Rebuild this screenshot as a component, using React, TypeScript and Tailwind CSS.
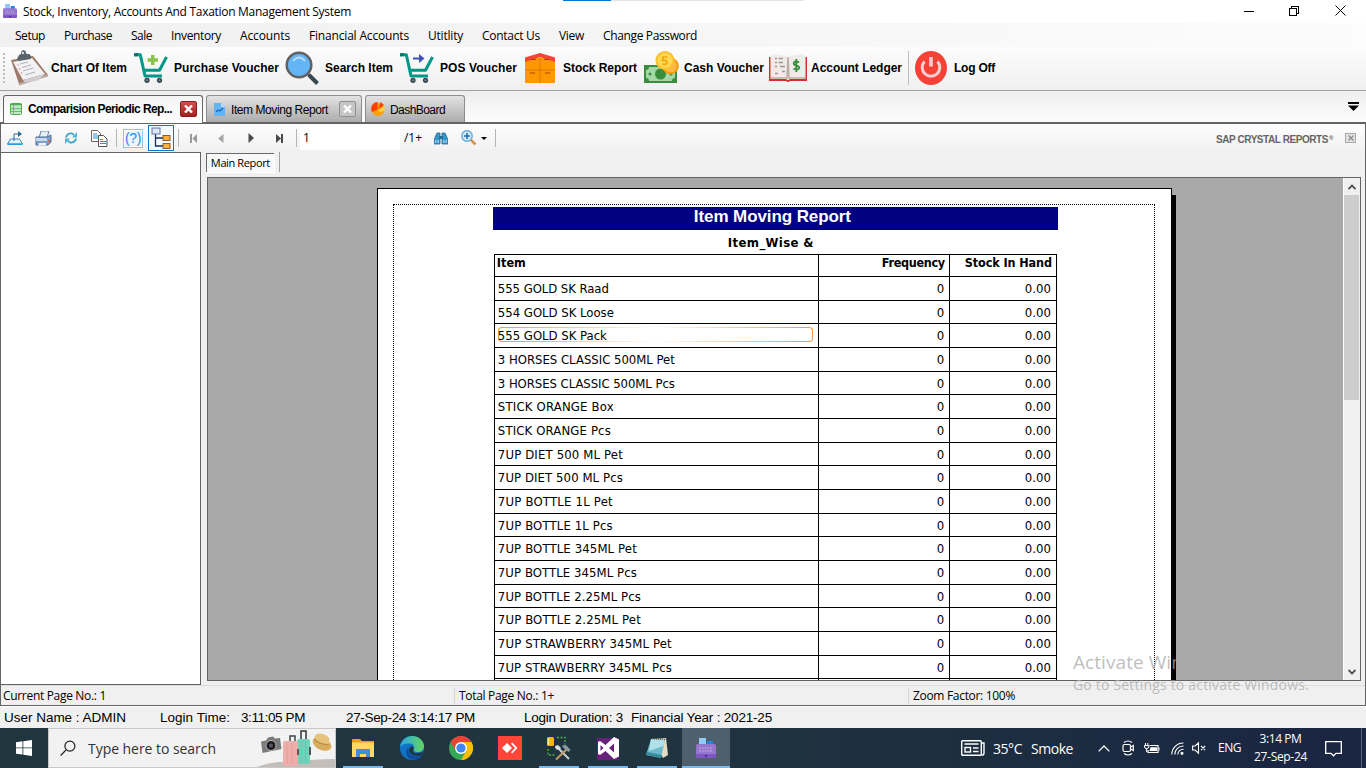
import React, { useLayoutEffect, useRef, useState } from "react";

/* Nowrap label whose letter spacing is computed so that it fills exactly `w` pixels. */
function Label({ w, children, className = "" }: { w: number; children: string; className?: string }) {
  const ref = useRef<HTMLSpanElement>(null);
  const [spacing, setSpacing] = useState(0);
  useLayoutEffect(() => {
    if (ref.current) {
      const natural = ref.current.getBoundingClientRect().width;
      setSpacing((w - natural) / children.length);
    }
  }, [w, children]);
  return (
    <span className={`block shrink-0 whitespace-nowrap ${className}`} style={{ width: w }}>
      <span ref={ref} className="inline-block" style={{ letterSpacing: spacing }}>
        {children}
      </span>
    </span>
  );
}

const AppIcon = ({ className }: { className: string }) => (
  <svg viewBox="0 0 20 20" className={className}>
    <rect x="3" y="0" width="7" height="8" fill="#90caf9" />
    <rect x="11" y="3" width="6" height="5" rx="1" fill="#1e88e5" />
    <path d="M0 8q0-2 2-2h16q2 0 2 2v9H0z" fill="#9575cd" />
    <path d="M0 16h20v2.500q0 1.500-1.500 1.500h-17Q0 20 0 18.500z" fill="#7e57c2" />
    <path d="M3 10h14M3 13h14" stroke="#b39ddb" strokeWidth="1.500" strokeDasharray="1.800 1" />
    <rect x="9" y="17" width="2" height="1.500" fill="#311b92" />
  </svg>
);

const ClipboardIcon = () => (
  <svg viewBox="0 0 38 36" className="h-9 w-[38px] shrink-0">
    <path d="M0 10l22-4 15 19L8 34z" fill="#a07a68" />
    <path d="M8 35.500l29-9V24L8 33z" fill="#b9a79c" />
    <path d="M2 12l19-4 13 16-22 6z" fill="#f2f2f5" />
    <path d="M12 30l22-6-7 6.500-13 2z" fill="#d2cdd0" />
    <path d="M9 14l8-2M11 17.500l9-2.500M12 21l10-3M14 25l10-3" stroke="#b4b4ba" strokeWidth="1.100" />
    <path d="M6.500 15h1.200M8 19h1.200M10 23h1.200" stroke="#d98a80" strokeWidth="1.500" />
    <path d="M6 9l2-4 2-1 .5-3 2-1 2 1 1 3 3 0 2 3-1 2-12 2z" fill="#59636a" />
    <circle cx="12" cy="3" r="1.200" fill="#d9dde0" />
  </svg>
);

const CartIcon = ({ kind }: { kind: "plus" | "arrow" }) => (
  <svg viewBox="0 0 34 30" className="h-[30px] w-[34px] shrink-0">
    <path d="M0 1.800h6.300L11 23h17" fill="none" stroke="#009688" strokeWidth="3" strokeLinejoin="round" />
    <path d="M9 17.300h16.500L32.500 4" fill="none" stroke="#009688" strokeWidth="3" strokeLinejoin="round" />
    <path d="M0 1.800h4" stroke="#00796b" strokeWidth="3" />
    {kind === "plus" ? (
      <path d="M17 2h3.500v3.300H24v3.400h-3.500V12H17V8.700h-3.500V5.300H17z" fill="#8bc34a" />
    ) : (
      <path d="M13 4.500h6V1l5.500 4.500L19 10V6.500h-6z" fill="#3f51b5" />
    )}
    <circle cx="13" cy="27.300" r="2.600" fill="#37474f" />
    <circle cx="25.500" cy="27.300" r="2.600" fill="#37474f" />
    <circle cx="13" cy="27.300" r="1" fill="#78909c" />
    <circle cx="25.500" cy="27.300" r="1" fill="#78909c" />
  </svg>
);

const SearchBigIcon = () => (
  <svg viewBox="0 0 34 34" className="h-[34px] w-[34px] shrink-0">
    <path d="M21 21l5 5" stroke="#616161" strokeWidth="3" />
    <path d="M24 24l8.500 8.500" stroke="#37474f" strokeWidth="4" />
    <circle cx="14" cy="14" r="12.300" fill="#64b5f6" stroke="#616161" strokeWidth="2.500" />
    <path d="M8 10q6-7 12 0" fill="none" stroke="#bbdefb" strokeWidth="1.800" />
  </svg>
);

const CabinetIcon = () => (
  <svg viewBox="0 0 30 30" className="h-[30px] w-[30px] shrink-0">
    <path d="M0 5h30v25H0z" fill="#ff9800" />
    <path d="M0 4.500L15 0l15 4.500V9l-15-5L0 9z" fill="#f44336" />
    <path d="M15 4v26M0 17h30" stroke="#e07800" strokeWidth="1" />
    <path d="M6 6.500h5M19 6.500h5M5 20h5M20 20h5" stroke="#a84300" strokeWidth="1.200" />
  </svg>
);

const MoneyIcon = () => (
  <svg viewBox="0 0 36 34" className="h-[34px] w-9 shrink-0">
    <rect x="1" y="14" width="33" height="18" fill="#388e3c" />
    <path d="M6 16h23q0 3 3 3v8q-3 0-3 3H6q0-3-3-3v-8q3 0 3-3z" fill="#a5d6a7" />
    <circle cx="17.500" cy="23" r="5.500" fill="#388e3c" />
    <circle cx="7" cy="23" r="1.500" fill="#388e3c" />
    <circle cx="28" cy="23" r="1.500" fill="#388e3c" />
    <circle cx="27.500" cy="15" r="8.300" fill="#ff9800" />
    <circle cx="27.500" cy="15" r="6.300" fill="#ffb74d" />
    <circle cx="22" cy="9.500" r="9.500" fill="#fbc02d" />
    <circle cx="22" cy="9.500" r="7.500" fill="#fdd854" />
    <path d="M24.500 6h-4.500l-.5 3.500q4-.8 4.500 1.500.2 3-4.500 2" fill="none" stroke="#f5a500" strokeWidth="1.700" />
  </svg>
);

const LedgerIcon = () => (
  <svg viewBox="0 0 38 29" className="h-[29px] w-[38px] shrink-0">
    <path d="M0 3h1.500v22H17q1 1 2 1t2-1h15.500V3H38v24H21q-2 2-4 0H0z" fill="#d32f2f" />
    <path d="M3 0l15 2v22H2V3z" fill="#efebe9" />
    <path d="M35 0L20 2v22h16V3z" fill="#efebe9" />
    <path d="M2 24h16l1-21 1 21h16" fill="none" stroke="#bcaaa4" strokeWidth="1.500" />
    <path d="M6 4.500h2M6 8.500h2M6 12.500h2M9.500 4.500H14M9.500 8.500H14M11 12.500h5M6 19.500h3M13 17.500h3" stroke="#a1978f" strokeWidth="1.300" />
    <path d="M30 8.500q-3-2-5 0-1 2 2 3 4 1 3 3-2 2.500-5.500 0M27.300 5v13" fill="none" stroke="#388e3c" strokeWidth="1.900" />
  </svg>
);

const PowerIcon = () => (
  <svg viewBox="0 0 34 34" className="h-[34px] w-[34px] shrink-0">
    <ellipse cx="17" cy="17" rx="16" ry="17" fill="#f44336" />
    <path d="M10.500 10.500a8.800 8.800 0 1 0 13 0" fill="none" stroke="#ffcdd2" strokeWidth="3" />
    <path d="M17 6v9.500" stroke="#ffcdd2" strokeWidth="3.600" />
  </svg>
);

const menus: [string, number][] = [
  ["Setup", 30], ["Purchase", 48], ["Sale", 21], ["Inventory", 50], ["Accounts", 50],
  ["Financial Accounts", 100], ["Utitlity", 35], ["Contact Us", 58], ["View", 25], ["Change Password", 94],
];

function TitleBar() {
  return (
    <header className="flex h-[23px] shrink-0 items-center bg-white pr-[20px] pb-px pl-[3px] text-[12px]">
      <AppIcon className="mr-[6px] h-[14px] w-[14px]" />
      <Label w={328} className="pt-px leading-[22px]">Stock, Inventory, Accounts And Taxation Management System</Label>
      <div className="ml-[212px] flex h-[1px] w-[241px] self-start bg-[#e5e5e5]">
        <div className="h-[1px] w-12 bg-[#0078d7]" />
      </div>
      <div className="ml-auto flex items-center pb-px">
        <svg viewBox="0 0 10 10" className="mr-[35px] h-[10px] w-[10px]" shapeRendering="crispEdges"><path d="M0 5.500h10" stroke="#000" /></svg>
        <svg viewBox="0 0 10 10" className="mr-9 h-[10px] w-[10px]" shapeRendering="crispEdges">
          <path d="M.5 2.500h7v7h-7zM2.500 2.500v-2h7v7h-2" fill="none" stroke="#000" />
        </svg>
        <svg viewBox="0 0 11 11" className="h-[11px] w-[11px]"><path d="M.5.5l10 10M10.500.5l-10 10" stroke="#000" /></svg>
      </div>
    </header>
  );
}

const Tool = ({ w, text, className, children }: { w: number; text: string; className: string; children: React.ReactNode }) => (
  <div className={`flex shrink-0 items-center justify-between ${className}`}>
    {children}
    <Label w={w}>{text}</Label>
  </div>
);

function ToolBar() {
  return (
    <div className="flex h-[44px] shrink-0 items-center border-b border-[#a0a0a0] bg-gradient-to-b from-[#fcfcfc] to-[#f0f0f0] pb-px pl-[3px] font-['Liberation_Sans'] text-[12px] font-bold text-black">
      <div className="mr-[6px] h-[30px] w-[2px] bg-[repeating-linear-gradient(#bdbdbd_0_2px,transparent_2px_4px)]" />
      <Tool w={76} text="Chart Of Item" className="w-[116px]"><ClipboardIcon /></Tool>
      <Tool w={105} text="Purchase Voucher" className="ml-[7px] w-[145px]"><CartIcon kind="plus" /></Tool>
      <Tool w={68} text="Search Item" className="ml-[6px] w-[108px]"><SearchBigIcon /></Tool>
      <Tool w={77} text="POS Voucher" className="ml-[7px] w-[117px]"><CartIcon kind="arrow" /></Tool>
      <Tool w={74} text="Stock Report" className="ml-[8px] w-[112px]"><CabinetIcon /></Tool>
      <Tool w={80} text="Cash Voucher" className="ml-[6px] w-[121px]"><MoneyIcon /></Tool>
      <Tool w={91} text="Account Ledger" className="ml-[5px] w-[133px]"><LedgerIcon /></Tool>
      <div className="mx-[6px] h-[34px] w-px bg-[#bdbdbd]" />
      <Tool w={41} text="Log Off" className="-ml-px w-[81px]"><PowerIcon /></Tool>
    </div>
  );
}

const CloseBox = ({ active }: { active?: boolean }) => (
  <div className={`flex h-4 w-[17px] items-center justify-center rounded-[2px] border ${active ? "border-[#8c1c1c] bg-gradient-to-b from-[#d05050] to-[#a81c1c]" : "border-[#8f8f8f] bg-[#c6c6c6]"}`}>
    <svg viewBox="0 0 9 8" className="h-2 w-[9px]"><path d="M1 .5l7 7M8 .5l-7 7" stroke="#fff" strokeWidth="2.400" /></svg>
  </div>
);

function TabStrip() {
  return (
    <div className="flex h-[33px] shrink-0 items-end border-b-2 border-[#646464] bg-gradient-to-b from-[#eeeeee] to-[#fdfdfd] pl-[3px] text-[11px] text-black">
      <div className="-mb-[1px] flex h-[28px] w-[200px] items-center rounded-t-[3px] border border-b-0 border-[#646464] bg-gradient-to-b from-[#f4f4f4] to-white pl-[6px]">
        <svg viewBox="0 0 12 12" className="mr-[6px] mb-px h-3 w-3">
          <rect x=".5" y=".5" width="11" height="11" rx="1" fill="#c8e6c9" stroke="#4caf50" />
          <path d="M0 1.500h12" stroke="#4caf50" strokeWidth="1.500" />
          <path d="M3.500 2v10M1 5.700h10M1 8.500h10" stroke="#66bb6a" />
        </svg>
        <Label w={144} className="mb-px font-['Liberation_Sans'] text-[12px] font-bold">Comparision Periodic Rep...</Label>
        <div className="mb-px ml-[8px]"><CloseBox active /></div>
      </div>
      <div className="ml-[3px] flex h-[27px] w-[156px] items-center rounded-t-[3px] border border-b-0 border-[#8e8e8e] bg-gradient-to-b from-[#e3e3e3] to-[#acacac] pl-[6px]">
        <svg viewBox="0 0 12 13" className="mr-[6px] h-[13px] w-3">
          <path d="M1 0h7l4 4v9H1z" fill="#64b5f6" /><path d="M8 0v4h4z" fill="#bbdefb" />
          <path d="M3 9l2-2 2 1 3-3" fill="none" stroke="#1565c0" strokeWidth="1.200" />
        </svg>
        <Label w={97} className="pt-[2px] font-['Liberation_Sans'] text-[12px]">Item Moving Report</Label>
        <div className="ml-[11px]"><CloseBox /></div>
      </div>
      <div className="ml-[3px] flex h-[27px] w-[100px] items-center rounded-t-[3px] border border-b-0 border-[#8e8e8e] bg-gradient-to-b from-[#e3e3e3] to-[#acacac] pl-[5px]">
        <svg viewBox="0 0 14 14" className="mr-[5px] h-[14px] w-[14px]">
          <circle cx="7" cy="7.500" r="6.500" fill="#ffa000" />
          <path d="M6.500 7.500V0A6.800 6.800 0 0 0 1 10z" fill="#ff3d00" />
          <path d="M7.500 7.500l2-7.500 3.500 3z" fill="#ff3d00" /><path d="M7 8l6.500-4.500v5L9 10z" fill="#ffd04a" />
        </svg>
        <Label w={55} className="pt-[2px] font-['Liberation_Sans'] text-[12px]">DashBoard</Label>
      </div>
      <svg viewBox="0 0 11 9" className="mr-[7px] mb-[11px] ml-auto h-[9px] w-[11px]"><path d="M0 0h11v2H0zM0 3.500h11L5.500 9z" fill="#000" /></svg>
    </div>
  );
}

const Sep = ({ className }: { className: string }) => <div className={`h-[18px] w-px bg-[#b5b5b5] ${className}`} />;

function ReportToolBar() {
  return (
    <div className="flex h-[28px] shrink-0 items-center bg-gradient-to-b from-[#fdfdfd] to-[#f1f1f1] pl-[6px]">
      <svg viewBox="0 0 16 14" className="h-[14px] w-4 shrink-0">
        <path d="M3.500 8h9l3 5H.5z" fill="#e3f2fd" stroke="#3a87b7" />
        <path d="M.5 13.300h15" stroke="#2c9ad8" strokeWidth="1.500" /><path d="M7 10V3h5" fill="none" stroke="#2b6a92" /><path d="M11 0l4 3-4 3z" fill="#2b6a92" />
      </svg>
      <svg viewBox="0 0 17 15" className="ml-3 h-[15px] w-[17px] shrink-0">
        <path d="M6 0h8l-2 7H4z" fill="#e8eef6" stroke="#62819f" /><path d="M1 6h11l4-2v7l-3 3H1z" fill="#7da0c8" stroke="#4b6f9e" />
        <path d="M1 7h11v3H1z" fill="#c9d8ea" /><path d="M4 12h7v2.500H3z" fill="#f5f5f5" /><path d="M14 9v2" stroke="#e74c3c" strokeWidth="1.500" />
      </svg>
      <svg viewBox="0 0 14 14" className="ml-3 h-[14px] w-[14px] shrink-0">
        <path d="M2 6.500Q3 2 8 2.500l2 1.500M12 7.500Q11 12 6 11.500l-2-1.500" fill="none" stroke="#3ba5c9" strokeWidth="1.800" />
        <path d="M13 1v5.500H8zM1 13V7.500h5z" fill="#4cb8da" />
      </svg>
      <svg viewBox="0 0 17 17" className="ml-[13px] h-[17px] w-[17px] shrink-0">
        <path d="M.5.5h6l3 3v8h-9z" fill="#fff" stroke="#666" /><path d="M2 4h4M2 6h6M2 8h6" stroke="#2d8fc4" />
        <path d="M7.500 5.500h5l3.500 3.500v7.500H7.500z" fill="#fff" stroke="#555" /><path d="M9 9.500h3M9 11.500h6M9 13.500h6" stroke="#2d8fc4" />
      </svg>
      <Sep className="ml-2" />
      <div className="ml-[6px] flex h-[19px] w-5 items-center justify-center border border-[#8cc5f5] bg-[#eaf5ff] shadow-[inset_0_0_0_1px_#fff]">
        <Label w={16} className="font-['Liberation_Sans'] text-[14px] leading-none text-[#2f8be0]">(?)</Label>
      </div>
      <div className="ml-[5px] flex h-[26px] w-[26px] items-center justify-center border border-[#0078d7] bg-[#f4f9fd]">
        <svg viewBox="0 0 20 22" className="h-[22px] w-5">
          <path d="M4.500 7v12H12M4.500 11H12" fill="none" stroke="#1e2f55" strokeWidth="1.300" />
          <rect x="1" y="1" width="8" height="6" fill="#dbe6f8" stroke="#6078a8" />
          <rect x="12" y="8.500" width="7" height="5" fill="#fbb03b" stroke="#8b5e34" /><rect x="12" y="16.500" width="7" height="5" fill="#fbb03b" stroke="#8b5e34" />
        </svg>
      </div>
      <Sep className="ml-1" />
      <svg viewBox="0 0 9 9" className="ml-[11px] h-[9px] w-[9px]"><path d="M0 0h2v9H0zM7 0v9L2.500 4.500z" fill="#9b9b9b" /></svg>
      <svg viewBox="0 0 6 9" className="ml-[19px] h-[9px] w-[6px]"><path d="M5.500 0v9L0 4.500z" fill="#a5a5a5" /></svg>
      <svg viewBox="0 0 6 10" className="ml-[24px] h-[10px] w-[6px]"><path d="M.5 0v10L6 5z" fill="#4a4a4a" /></svg>
      <svg viewBox="0 0 9 9" className="ml-[21px] h-[9px] w-[9px]"><path d="M6 0h2v9H6zM1 0v9l5-4.500z" fill="#4a4a4a" /></svg>
      <Sep className="ml-3" />
      <div className="ml-[3px] h-[23px] w-[100px] bg-white pl-[3px] text-[12px] leading-[21px]">1</div>
      <Label w={18} className="ml-1 text-[12px]">/1+</Label>
      <svg viewBox="0 0 14 13" className="ml-3 h-[13px] w-[14px] shrink-0">
        <path d="M2 3l1-2h3v11H0V8zM8 1h3l1 2 2 5v4H8z" fill="#3596c9" stroke="#256f9f" strokeWidth=".8" /><path d="M5 4h4v3H5z" fill="#256f9f" />
        <path d="M1.800 8v3M4.200 8v3M9.800 8v3M12.200 8v3" stroke="#bfe3f7" />
      </svg>
      <svg viewBox="0 0 16 16" className="ml-[13px] h-4 w-4 shrink-0">
        <path d="M9.500 9.500l5 5" stroke="#d9924c" strokeWidth="2.500" /><circle cx="6" cy="6" r="5.200" fill="#d5ecfb" stroke="#64a9dc" strokeWidth="1.400" />
        <path d="M6 3v6M3 6h6" stroke="#1c71ad" strokeWidth="1.600" />
      </svg>
      <svg viewBox="0 0 6 3" className="ml-[4px] h-[3px] w-[6px]"><path d="M0 0h6L3 3z" /></svg>
      <Sep className="ml-2" />
      <div className="mt-[3px] mr-px ml-auto flex items-start gap-px font-['Liberation_Sans'] font-bold text-[#666]">
        <Label w={112} className="text-[10px]">SAP CRYSTAL REPORTS</Label>
        <Label w={5} className="mt-[2px] text-[6px]">®</Label>
      </div>
      <div className="mr-[9px] ml-[10px] flex h-[10px] w-[11px] items-center justify-center border border-[#a8a8a8] bg-[#e3e3e3]">
        <svg viewBox="0 0 6 6" className="h-[6px] w-[6px]"><path d="M.5.5l5 5M5.500.5l-5 5" stroke="#8a8a8a" strokeWidth="1.200" /></svg>
      </div>
    </div>
  );
}

const items: [string, number][] = [
  ["555 GOLD SK Raad", 111], ["554 GOLD SK Loose", 116], ["555 GOLD SK Pack", 109],
  ["3 HORSES CLASSIC 500ML Pet", 177], ["3 HORSES CLASSIC 500ML Pcs", 177],
  ["STICK ORANGE Box", 116], ["STICK ORANGE Pcs", 113],
  ["7UP DIET 500 ML Pet", 125], ["7UP DIET 500 ML Pcs", 125],
  ["7UP BOTTLE 1L Pet", 115], ["7UP BOTTLE 1L Pcs", 115],
  ["7UP BOTTLE 345ML Pet", 139], ["7UP BOTTLE 345ML Pcs", 139],
  ["7UP BOTTLE 2.25ML Pcs", 143], ["7UP BOTTLE 2.25ML Pet", 143],
  ["7UP STRAWBERRY 345ML Pet", 174], ["7UP STRAWBERRY 345ML Pcs", 174],
];

function ReportPage() {
  return (
    <div className="mt-[10px] ml-[169px] h-[900px] w-[795px] border border-black bg-white pt-[15px] pl-[15px] shadow-[4px_7px_0_0_#000]">
      <div className="h-[900px] w-[762px] border border-dotted border-black pt-[2px] pl-[99px] font-['DejaVu_Sans_Condensed'] text-[13px] text-black">
        <div className="flex h-[23px] w-[565px] justify-center bg-[#000080] pr-[6px]">
          <Label w={157} className="font-['Liberation_Sans'] text-[17px] leading-[20px] font-bold text-white">Item Moving Report</Label>
        </div>
        <div className="flex h-6 w-[565px] justify-center pt-[3px] pr-[9px] font-bold"><Label w={86}>Item_Wise &amp;</Label></div>
        <div className="ml-[1px] w-[563px] border-t border-r border-black">
          <div className="grid h-[22px] grid-cols-[324px_131px_107px] border-b border-black text-[12.500px] leading-[15px] font-bold">
            <div className="border-l border-black pl-[2px]"><Label w={29}>Item</Label></div>
            <div className="flex justify-end border-l border-black pr-[4px]"><Label w={63}>Frequency</Label></div>
            <div className="flex justify-end border-l border-black pr-[4px]"><Label w={87}>Stock In Hand</Label></div>
          </div>
          {items.map(([name, w], i) => (
            <div key={name} className="grid h-[23.670px] grid-cols-[324px_131px_107px] border-b border-black leading-[24px]">
              <div className="relative border-l border-black pl-[3px]">
                {i === 2 && (
                  <div className="absolute top-[3px] left-[3px] h-[15px] w-[315px] rounded-[4px] bg-[linear-gradient(90deg,#f79646,#fff_50%,#f79646)] p-px">
                    <div className="h-full w-full rounded-[3px] bg-white" />
                  </div>
                )}
                <Label w={w} className="relative">{name}</Label>
              </div>
              <div className="flex justify-end border-l border-black pr-[4px]"><Label w={8}>0</Label></div>
              <div className="flex justify-end border-l border-black pr-[5px]"><Label w={26}>0.00</Label></div>
            </div>
          ))}
          <div className="grid h-6 grid-cols-[324px_131px_107px]">
            <div className="border-l border-black" /><div className="border-l border-black" /><div className="border-l border-black" />
          </div>
        </div>
      </div>
    </div>
  );
}

function ScrollBar() {
  return (
    <div className="flex w-[17px] shrink-0 flex-col items-center border-l border-white bg-[#f0f0f0]">
      <svg viewBox="0 0 8 6" className="mt-[6px] h-[6px] w-2"><path d="M.5 5L4 1.500 7.500 5" fill="none" stroke="#505050" strokeWidth="1.800" /></svg>
      <div className="mt-[5px] h-[205px] w-[15px] bg-[#cdcdcd]" />
      <svg viewBox="0 0 8 6" className="mt-auto mb-[5px] h-[6px] w-2"><path d="M.5 1L4 4.500 7.500 1" fill="none" stroke="#505050" strokeWidth="1.800" /></svg>
    </div>
  );
}

function Viewer() {
  return (
    <div className="flex h-[533px] shrink-0">
      <div className="w-[200px] border border-l-0 border-[#646464] bg-white" />
      <div className="flex w-[1165px] flex-col pl-[6px]">
        <div className="flex h-[25px] items-start">
          <div className="mt-[1px] -ml-[1px] flex h-[19px] w-[68px] items-center border-t border-l border-[#696969] bg-[#f8f8f8] pl-[4px] text-[11px] shadow-[1px_1px_0_#fff]">
            <Label w={59}>Main Report</Label>
          </div>
          <div className="ml-[5px] h-5 w-px bg-[#a0a0a0]" />
        </div>
        <div className="flex h-[504px] w-[1154px] overflow-hidden border border-[#646464] bg-[#a9a9a9]">
          <div className="min-w-0 flex-1 overflow-hidden"><ReportPage /></div>
          <ScrollBar />
        </div>
      </div>
    </div>
  );
}

function StatusBar() {
  return (
    <div className="flex h-[21px] shrink-0 items-center border-t border-b border-t-[#dcdcdc] border-b-[#646464] pl-[2px] text-[12px]">
      <Label w={103}>Current Page No.: 1</Label>
      <div className="ml-[348px] h-4 w-px bg-[#d5d5d5]" />
      <Label w={95} className="ml-[4px]">Total Page No.: 1+</Label>
      <div className="ml-[354px] h-4 w-px bg-[#d5d5d5]" />
      <Label w={102} className="ml-[4px]">Zoom Factor: 100%</Label>
    </div>
  );
}

const Slot = ({ active, running, children, className = "w-[49px]" }: { active?: boolean; running?: boolean; children: React.ReactNode; className?: string }) => (
  <div className={`flex h-10 shrink-0 flex-col items-center ${active ? "bg-[#4f5f6b]" : ""} ${className}`}>
    <div className="flex h-[38px] items-center pt-[2px]">{children}</div>
    {running && <div className={`h-[2px] bg-[#76b9ed] ${active ? "w-full" : "w-10"}`} />}
  </div>
);

function TaskBar() {
  return (
    <footer className="flex h-10 shrink-0 items-center bg-gradient-to-r from-[#20363e] via-[#20343f] to-[#1a2542] font-['Open_Sans'] text-white">
      <svg viewBox="0 0 16 16" className="mx-4 h-4 w-4"><path d="M0 2.300L6.500 1.300v6.200H0zM7.300 1.200L16 0v7.500H7.300zM0 8.300h6.500v6.300L0 13.700zM7.300 8.300H16V16l-8.700-1.200z" fill="#fff" /></svg>
      <div className="flex h-10 w-[288px] items-center overflow-hidden border border-[#c8c8c8] bg-[#f2f2f2] pl-[11px] text-[#333]">
        <svg viewBox="0 0 17 17" className="h-[17px] w-[17px]"><circle cx="10.500" cy="6" r="5.300" fill="none" stroke="#222" strokeWidth="1.300" /><path d="M6.500 10L.7 16" stroke="#222" strokeWidth="1.400" /></svg>
        <Label w={128} className="ml-[12px] text-[14px]">Type here to search</Label>
        <svg viewBox="0 0 78 38" className="ml-[41px] h-[38px] w-[78px] shrink-0 self-end">
          <path d="M0 38q16-6 34-5 24-3 44-3v8z" fill="#c4beba" />
          <path d="M4 12.500l5-1 2-3 5-1 2 2 5-.5 1.500 11-19 4z" fill="#7b7b7b" /><circle cx="14" cy="16.500" r="5" fill="#1c1c1c" stroke="#bbb" /><circle cx="14" cy="16.500" r="2" fill="#555a66" />
          <path d="M33 12V7h5v5" fill="none" stroke="#444" strokeWidth="1.500" /><path d="M44 10V2h5v8" fill="none" stroke="#333" strokeWidth="1.500" />
          <rect x="40" y="10" width="13" height="25" rx="2" fill="#6fd3ba" /><path d="M44 12v21M48.500 12v21" stroke="#62c7ae" />
          <rect x="26" y="12" width="15" height="25" rx="2" fill="#eeaeab" /><path d="M30 14v21M35 14v21" stroke="#e4a09c" />
          <path d="M53 18v8M41 20v6" stroke="#555" strokeWidth="2" />
          <ellipse cx="65" cy="15" rx="10" ry="6" transform="rotate(24 65 15)" fill="#d9ad5f" /><path d="M57 10q1-7 9-5t6 10q-8 1-15-5z" fill="#e8c47a" /><path d="M57 10q6 6 14.500 5.500" stroke="#b98a44" strokeWidth="1.300" fill="none" />
        </svg>
      </div>
      <Slot running className="ml-[2px] w-[49px]">
        <svg viewBox="0 0 22 18" className="h-[18px] w-[22px]"><path d="M0 1q0-1 1-1h7l2 2h12v4H0z" fill="#e8a317" /><rect y="3.500" width="22" height="14.500" fill="#ffd765" /><path d="M4 18v-7q0-1 1-1h12q1 0 1 1v7h-4v-3H8v3z" fill="#3c8fdd" /></svg>
      </Slot>
      <Slot>
        <svg viewBox="0 0 24 24" className="h-6 w-6">
          <defs><linearGradient id="edge" x1="0" y1="0" x2="1" y2="0"><stop offset="0" stopColor="#2aa5e6" /><stop offset="1" stopColor="#62d65d" /></linearGradient></defs>
          <circle cx="12" cy="12" r="12" fill="#1273c4" />
          <path d="M0 11C1 4 6 0 12 0c7 0 12 5 12 10 0 4-3 6-6 6-3.500 0-5-1.500-4-3 .8-1.500.5-5-4-5.500C5 7 1 9 0 11z" fill="url(#edge)" />
          <path d="M8.500 12c-1 6 5 9.500 13.500 7 .8-.4.800.500 0 1-4 5-11 4.500-14 1.500-3-3.500-2.500-8 .5-9.500z" fill="#0d4f9e" />
          <path d="M13.500 11.500c1 2-2.500 4 1.500 5.500 4 1 7-1 8-2l-1 4c-6 2-13-.5-13-5 0-3 3-4.500 4.500-2.500z" fill="#20363e" />
        </svg>
      </Slot>
      <Slot>
        <svg viewBox="0 0 24 24" className="h-6 w-6"><circle cx="12" cy="12" r="12" fill="#34a853" /><path d="M12 12L1.600 6A12 12 0 0 1 22.400 6z" fill="#ea4335" /><path d="M12 6h10.400A12 12 0 0 1 12 24l5.200-9z" fill="#fbbc05" /><path d="M1.600 6L6.800 15 12 12V6z" fill="#ea4335" /><circle cx="12" cy="12" r="6" fill="#fff" /><circle cx="12" cy="12" r="4.600" fill="#4285f4" /></svg>
      </Slot>
      <Slot>
        <svg viewBox="0 0 24 24" className="h-6 w-6"><path d="M0 0h24v24H0z" fill="#ff4438" /><path d="M9 7l5 5-5 5-5-5z" fill="#fff" /><path d="M13 7.700l1.200-1.200 5.300 5.500-5.300 5.500L13 16.300l4-4.300z" fill="#fff" /></svg>
      </Slot>
      <Slot running>
        <svg viewBox="0 0 24 24" className="h-6 w-6">
          <rect x="0" y="1" width="7" height="9" rx="1.500" fill="#f4b400" /><path d="M1.500 2v7" stroke="#ffe48a" strokeWidth="1.500" />
          <path d="M10 1.500h8v7M1 13v6h7" fill="none" stroke="#4fae3c" strokeDasharray="2 1.500" strokeWidth="1.300" />
          <path d="M11 12l11 11" stroke="#c9d2d8" strokeWidth="2" /><path d="M20 13L9 23.500" stroke="#c59b62" strokeWidth="2" /><path d="M15 9.500l4-.5 4.500 5-2 2-5-4z" fill="#8a98a2" /><path d="M8 10q0 4 4 4l2-2-3-3" fill="#d7dee2" />
        </svg>
      </Slot>
      <Slot running>
        <svg viewBox="0 0 22 24" className="h-6 w-[22px]"><path d="M0 2h22v22H0z" fill="#68217a" /><path d="M17 1l5 2.500v17L17 23 8.500 15 3 19l-2-1V6l2-1 5.500 4zM17 7.500L12 12l5 4.500zM3.500 9v6l3-3z" fill="#fff" fillRule="evenodd" /></svg>
      </Slot>
      <Slot running>
        <svg viewBox="0 0 24 24" className="h-6 w-6"><path d="M7 3l14-1 2 17-5 3z" fill="#e5dcc2" /><path d="M6 3l14 1-4 18-15-3z" fill="#6bb9c9" /><path d="M6 3l14 1-1.500 6L4 15z" fill="#b0e0e8" /><path d="M1 19l15 3 1-3-15-3z" fill="#378b9d" /><path d="M7 2.500l13 1" stroke="#555" strokeDasharray="1 1" strokeWidth="1.500" /></svg>
      </Slot>
      <Slot running active className="ml-px w-[48px]"><AppIcon className="h-5 w-5" /></Slot>
      <svg viewBox="0 0 24 16" className="ml-auto h-4 w-6 shrink-0" fill="none" stroke="#fff" strokeWidth="1.400"><rect x=".7" y=".7" width="19.600" height="14.600" rx="1" /><path d="M20.500 3H23v10q0 2.300-2.500 2.300M3.500 4h14M12 8h5.500M12 11.500h5.500" /><rect x="4" y="7.500" width="5.500" height="4.500" /></svg>
      <Label w={29} className="ml-2 text-[14px]">35°C</Label>
      <Label w={42} className="ml-[9px] text-[14px]">Smoke</Label>
      <svg viewBox="0 0 12 7" className="ml-[25px] h-[7px] w-3 shrink-0"><path d="M.6 6.400L6 1l5.400 5.400" fill="none" stroke="#fff" strokeWidth="1.300" /></svg>
      <svg viewBox="0 0 12 16" className="ml-3 h-4 w-3 shrink-0" fill="none" stroke="#fff" strokeWidth="1.200"><rect x="1" y="4.500" width="7.500" height="7" rx="1.500" /><path d="M8.500 7l2.800-1.500v5L8.500 9M2 2.500Q6-.5 10 2.500M2 13.500q4 3 8 0" /></svg>
      <svg viewBox="0 0 16 11" className="ml-[10px] h-[11px] w-4 shrink-0"><path d="M5.500 2.500H14v7H4V7" fill="none" stroke="#fff" strokeWidth="1.200" /><path d="M6.500 4.200H13V8H5.500z" fill="#fff" /><path d="M15 4.500v3M1.500 0v2M3.800 0v2M.5 2.500h4.300V4q0 1.500-2.200 1.500Q.5 5.500.5 4zM2.600 5v4" stroke="#fff" fill="none" /></svg>
      <svg viewBox="0 0 13 13" className="ml-[11px] h-[13px] w-[13px] shrink-0" fill="none" stroke="#fff" strokeWidth="1.100"><path d="M.8 12.500A11.500 11.500 0 0 1 12.500 1M3.800 12.500A8.500 8.500 0 0 1 12.500 4M6.800 12.500A5.500 5.500 0 0 1 12.500 7.200" /><circle cx="11" cy="11.300" r="1" fill="#fff" /></svg>
      <svg viewBox="0 0 14 12" className="ml-2 h-3 w-[14px] shrink-0" fill="none" stroke="#fff" strokeWidth="1.100"><path d="M.6 4h2.500L6.500.800v10.400L3.100 8H.6zM9 4l4.200 4.200M13.200 4L9 8.200" /></svg>
      <Label w={23} className="ml-3 text-[12px]">ENG</Label>
      <div className="ml-[12px] flex w-[55px] flex-col items-center text-[12px] leading-[18px]">
        <Label w={42}>3:14 PM</Label>
        <Label w={53}>27-Sep-24</Label>
      </div>
      <svg viewBox="0 0 17 16" className="mt-[1px] mr-[19px] ml-[17px] h-4 w-[17px] shrink-0"><path d="M.7.7h15.600v11.600H11l-2.500 2.500L6 12.300H.7z" fill="none" stroke="#fff" strokeWidth="1.300" /></svg>
      <div className="mr-1 h-10 w-px bg-[#5b6478]" />
    </footer>
  );
}

export default function App() {
  return (
    <div className="relative flex h-[768px] w-[1366px] flex-col overflow-hidden bg-[#f0f0f0] font-['Open_Sans',sans-serif] text-black">
      <TitleBar />
      <nav className="flex h-6 shrink-0 items-center gap-[19px] bg-gradient-to-r from-[#f0f0f0] to-[#fcfcfc] pt-px pl-[15px] text-[12px]">
        {menus.map(([m, w]) => <Label key={m} w={w}>{m}</Label>)}
      </nav>
      <ToolBar />
      <TabStrip />
      <div className="flex h-[582px] w-[1366px] shrink-0 flex-col border-r border-l border-[#646464]">
        <ReportToolBar />
        <Viewer />
        <StatusBar />
      </div>
      <div className="flex min-h-0 flex-1 items-center border-t border-white pt-px pl-1 font-['Liberation_Sans'] text-[13.500px]">
        <Label w={122}>User Name : ADMIN</Label>
        <Label w={70} className="ml-[34px]">Login Time:</Label>
        <Label w={64} className="ml-[11px]">3:11:05 PM</Label>
        <Label w={129} className="ml-[41px]">27-Sep-24 3:14:17 PM</Label>
        <Label w={99} className="ml-[49px]">Login Duration: 3</Label>
        <Label w={141} className="ml-2">Financial Year : 2021-25</Label>
      </div>
      <TaskBar />
      <div className="pointer-events-none absolute top-[648px] left-[1073px] text-[#a9a9a9]/75">
        <Label w={157} className="text-[19px] leading-[28px]">Activate Windows</Label>
        <Label w={236} className="text-[14px] leading-[18px]">Go to Settings to activate Windows.</Label>
      </div>
    </div>
  );
}
